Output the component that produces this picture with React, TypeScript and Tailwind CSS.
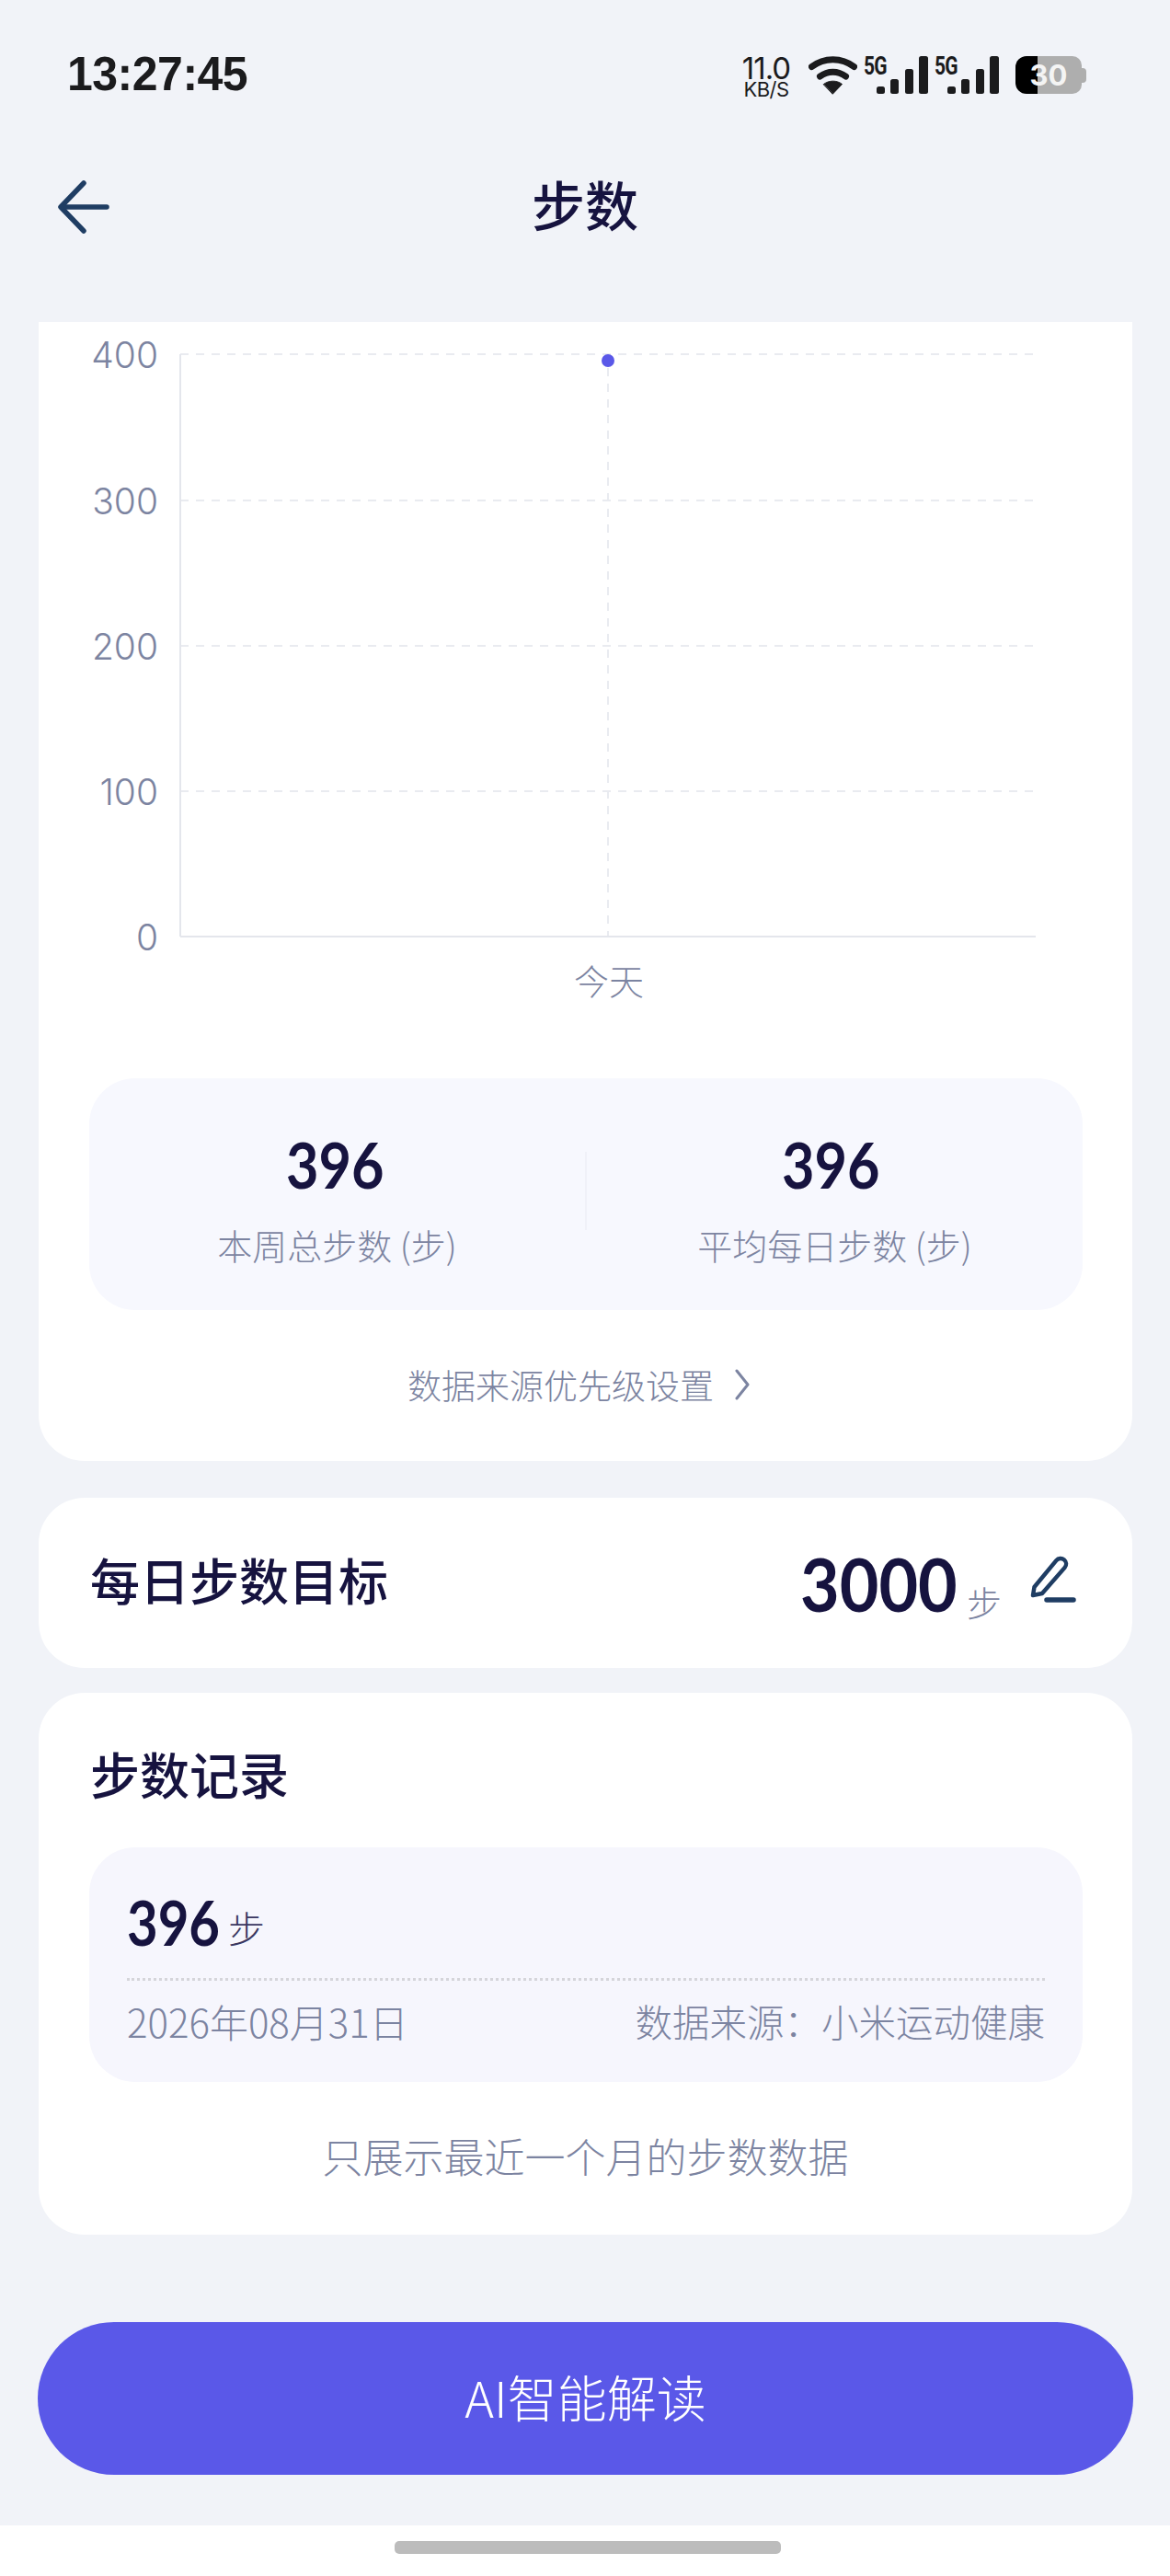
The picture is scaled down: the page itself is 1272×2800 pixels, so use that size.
export default function App() {
  const cjk = "font-['Noto_Sans_CJK_SC','Noto_Sans',sans-serif]";
  const num = "font-['Lato','Noto_Sans_CJK_SC',sans-serif]";
  const Bars = () => (
    <div className="flex items-start w-[70px]">
      <span className="font-['Roboto',sans-serif] font-bold text-[28px] leading-[22px] w-[14px] tracking-[-1px] text-[#1b1b1d] scale-x-[0.75] origin-left">5G</span>
      <svg width="56" height="41" viewBox="0 0 56 41" className="shrink-0" fill="#1b1b1d">
        <rect x="0" y="33" width="9" height="8" rx="2.5" />
        <rect x="15" y="25" width="9" height="16" rx="2.5" />
        <rect x="31" y="14" width="9" height="27" rx="2.5" />
        <rect x="46" y="0" width="10" height="41" rx="2.5" />
      </svg>
    </div>
  );
  const yLabels = [
    ["400", 385],
    ["300", 544],
    ["200", 702],
    ["100", 860],
    ["0", 1018],
  ] as const;
  const label = "font-light text-[#7c84a1]";
  return (
    <div className={`w-[1272px] h-[2800px] bg-[#f1f3f8] flex flex-col ${cjk}`}>
      {/* status bar */}
      <div className="h-[164px] shrink-0 flex items-start justify-between pl-[73px] pr-[91px] pt-[61px]">
        <span className="font-['Liberation_Sans',sans-serif] font-bold text-[51px] leading-[40px] text-[#1b1b1d] tracking-[-0.5px] scale-x-[0.98] origin-left">13:27:45</span>
        <div className="flex items-start">
          <div className="w-[56px] flex flex-col items-center font-['Inter',sans-serif] text-[#1b1b1d] mr-[18px]">
            <span className="text-[33px] leading-[26px] tracking-[-1px]">11.0</span>
            <span className="text-[22px] leading-[20px] tracking-[-0.5px]">KB/S</span>
          </div>
          <svg width="53" height="42" viewBox="0 0 53 42" className="mr-[7px] shrink-0" fill="none" stroke="#1b1b1d" strokeLinecap="round">
            <path d="M3.5 11.5C17 1 36 1 49.5 11.5" strokeWidth="7" />
            <path d="M12.5 22C21 15.5 32 15.5 40.5 22" strokeWidth="7" />
            <path d="M16.5 30.5C22 26 31 26 36.5 30.5L26.5 41Z" fill="#1b1b1d" stroke="#1b1b1d" strokeWidth="1" strokeLinejoin="round" />
          </svg>
          <div className="mr-[7px]"><Bars /></div>
          <div className="mr-[18px]"><Bars /></div>
          <div className="relative w-[77px] h-[41px] flex overflow-hidden">
            <div className="w-[24px] h-full bg-black rounded-l-[12px]" />
            <div className="w-[48px] h-full bg-[#aeaeae] rounded-r-[10px]" />
            <div className="w-[5px] h-[16px] my-auto bg-[#aeaeae] rounded-r-[4px]" />
            <span className="absolute left-[13px] top-0 w-[46px] text-center font-['Inter',sans-serif] font-bold text-[31px] leading-[41px] text-[#f4f4f4]">30</span>
          </div>
        </div>
      </div>

      {/* header */}
      <div className="h-[186px] shrink-0 flex items-start relative">
        <svg width="56" height="58" viewBox="0 0 56 58" className="absolute left-[63px] top-[32px]" fill="none" stroke="#1f3d63" strokeWidth="5.5" strokeLinecap="round" strokeLinejoin="round">
          <path d="M28 3L3 29L28 55" />
          <path d="M4 29H53" />
        </svg>
        <h1 className="w-full -mt-[3px] text-center text-[58px] leading-[120px] font-medium text-[#16133f]">步数</h1>
      </div>

      {/* chart card */}
      <div className="mx-[42px] w-[1189px] h-[1238px] shrink-0 bg-white rounded-b-[50px] flex flex-col">
        <svg width="1189" height="760" viewBox="42 350 1189 760" className="shrink-0">
          {[385, 544, 702, 860].map((y) => (
            <line key={y} x1="196" x2="1128" y1={y} y2={y} stroke="#e9ebf0" strokeWidth="2" strokeDasharray="9 8" />
          ))}
          <line x1="661" x2="661" y1="400" y2="1018" stroke="#e9ebf0" strokeWidth="2" strokeDasharray="9 8" />
          <line x1="196" x2="196" y1="385" y2="1018" stroke="#e4e6ec" strokeWidth="2" />
          <line x1="196" x2="1126" y1="1018" y2="1018" stroke="#e4e6ec" strokeWidth="2" />
          <circle cx="661" cy="392" r="7" fill="#5a58e8" />
          {yLabels.map(([t, y]) => (
            <text key={t} x="172" y={y + 15} textAnchor="end" fontFamily="Inter, sans-serif" fontWeight="300" fontSize="39" fill="#7c84a1">{t}</text>
          ))}
          <text x="662" y="1081" textAnchor="middle" fontFamily="'Noto Sans CJK SC', sans-serif" fontWeight="300" fontSize="38" fill="#7c84a1">今天</text>
        </svg>
        <div className="mx-[55px] w-[1080px] mt-[62px] h-[252px] rounded-[50px] bg-[#f7f8fe] flex items-start relative">
          <div className="flex-1 flex flex-col items-center">
            <span className={`${num} mt-[58px] -ml-[5px] text-[68px] leading-[72px] font-bold text-[#16133f] scale-x-[0.9]`}>396</span>
            <span className={`mt-[26px] text-[38px] leading-[50px] ${label}`}>本周总步数 (步)</span>
          </div>
          <div className="w-[2px] h-[85px] mt-[80px] bg-[#f0f1f8]" />
          <div className="flex-1 flex flex-col items-center">
            <span className={`${num} mt-[58px] -ml-[9px] text-[68px] leading-[72px] font-bold text-[#16133f] scale-x-[0.9]`}>396</span>
            <span className={`mt-[26px] text-[38px] leading-[50px] ${label}`}>平均每日步数 (步)</span>
          </div>
        </div>
        <div className="mt-[56px] pr-[14px] flex items-center justify-center gap-[22px]">
          <span className={`text-[37px] leading-[50px] ${label}`}>数据来源优先级设置</span>
          <svg width="18" height="34" viewBox="0 0 18 34" fill="none" stroke="#7c84a1" strokeWidth="3" strokeLinecap="round" strokeLinejoin="round">
            <path d="M3 2L15 17L3 32" />
          </svg>
        </div>
      </div>

      {/* goal card */}
      <div className="mt-[40px] mx-[42px] w-[1189px] h-[185px] shrink-0 bg-white rounded-[50px] flex items-center justify-between pl-[56px] pr-[60px]">
        <span className="text-[54px] leading-[70px] font-medium text-[#16133f] -mt-[7px]">每日步数目标</span>
        <div className="flex items-center">
          <span className={`${num} w-[171px] text-[80px] leading-[80px] font-bold text-[#16133f] scale-x-[0.92] origin-left -ml-[5px]`}>3000</span>
          <span className="ml-[10px] mt-[40px] text-[38px] leading-[40px] font-light text-[#7c84a1]">步</span>
          <svg width="52" height="54" viewBox="0 0 52 54" className="ml-[30px] -mt-[5px]" fill="none" stroke="#1f3d63" strokeLinecap="round" strokeLinejoin="round">
            <path d="M4 43L5.5 34L29.4 5.1A6 6 0 0 1 38.6 12.9L14 41Z" strokeWidth="4.5" />
            <path d="M19 48H48" strokeWidth="5.5" />
          </svg>
        </div>
      </div>

      {/* record card */}
      <div className="mt-[27px] mx-[42px] w-[1189px] h-[589px] shrink-0 bg-white rounded-[50px] flex flex-col">
        <h2 className="mt-[53px] ml-[56px] text-[54px] leading-[70px] font-medium text-[#16133f]">步数记录</h2>
        <div className="mt-[45px] mx-[55px] w-[1080px] h-[255px] rounded-[50px] bg-[#f6f6fd] px-[41px] flex flex-col">
          <div className="h-[145px] border-b-[3px] border-dotted border-[#d5d5da] flex items-center pt-[22px]">
            <span className={`${num} w-[104px] text-[66px] leading-[70px] font-bold text-[#16133f] scale-x-[0.88] origin-left`}>396</span>
            <span className="ml-[6px] mt-[10px] text-[40px] leading-[50px] font-light text-[#3a3760]">步</span>
          </div>
          <div className="flex justify-between items-center mt-[16px]">
            <span className={`text-[42px] leading-[56px] ${label}`}>2026年08月31日</span>
            <span className={`text-[40.5px] leading-[56px] ${label}`}>数据来源：小米运动健康</span>
          </div>
        </div>
        <p className={`mt-[50px] text-center text-[44px] leading-[60px] ${label}`}>只展示最近一个月的步数数据</p>
      </div>

      {/* AI button */}
      <div className="mt-[95px] mx-[41px] w-[1191px] h-[166px] shrink-0 rounded-full bg-[#5a58e8] flex items-center justify-center text-[54px] leading-[70px] text-white font-light pb-[5px]">AI智能解读</div>

      {/* home bar */}
      <div className="mt-[55px] flex-1 bg-white flex justify-center pt-[17px] pl-[6px]">
        <div className="w-[420px] h-[14px] rounded-[5px] bg-[#bcbcbc]" />
      </div>
    </div>
  );
}
